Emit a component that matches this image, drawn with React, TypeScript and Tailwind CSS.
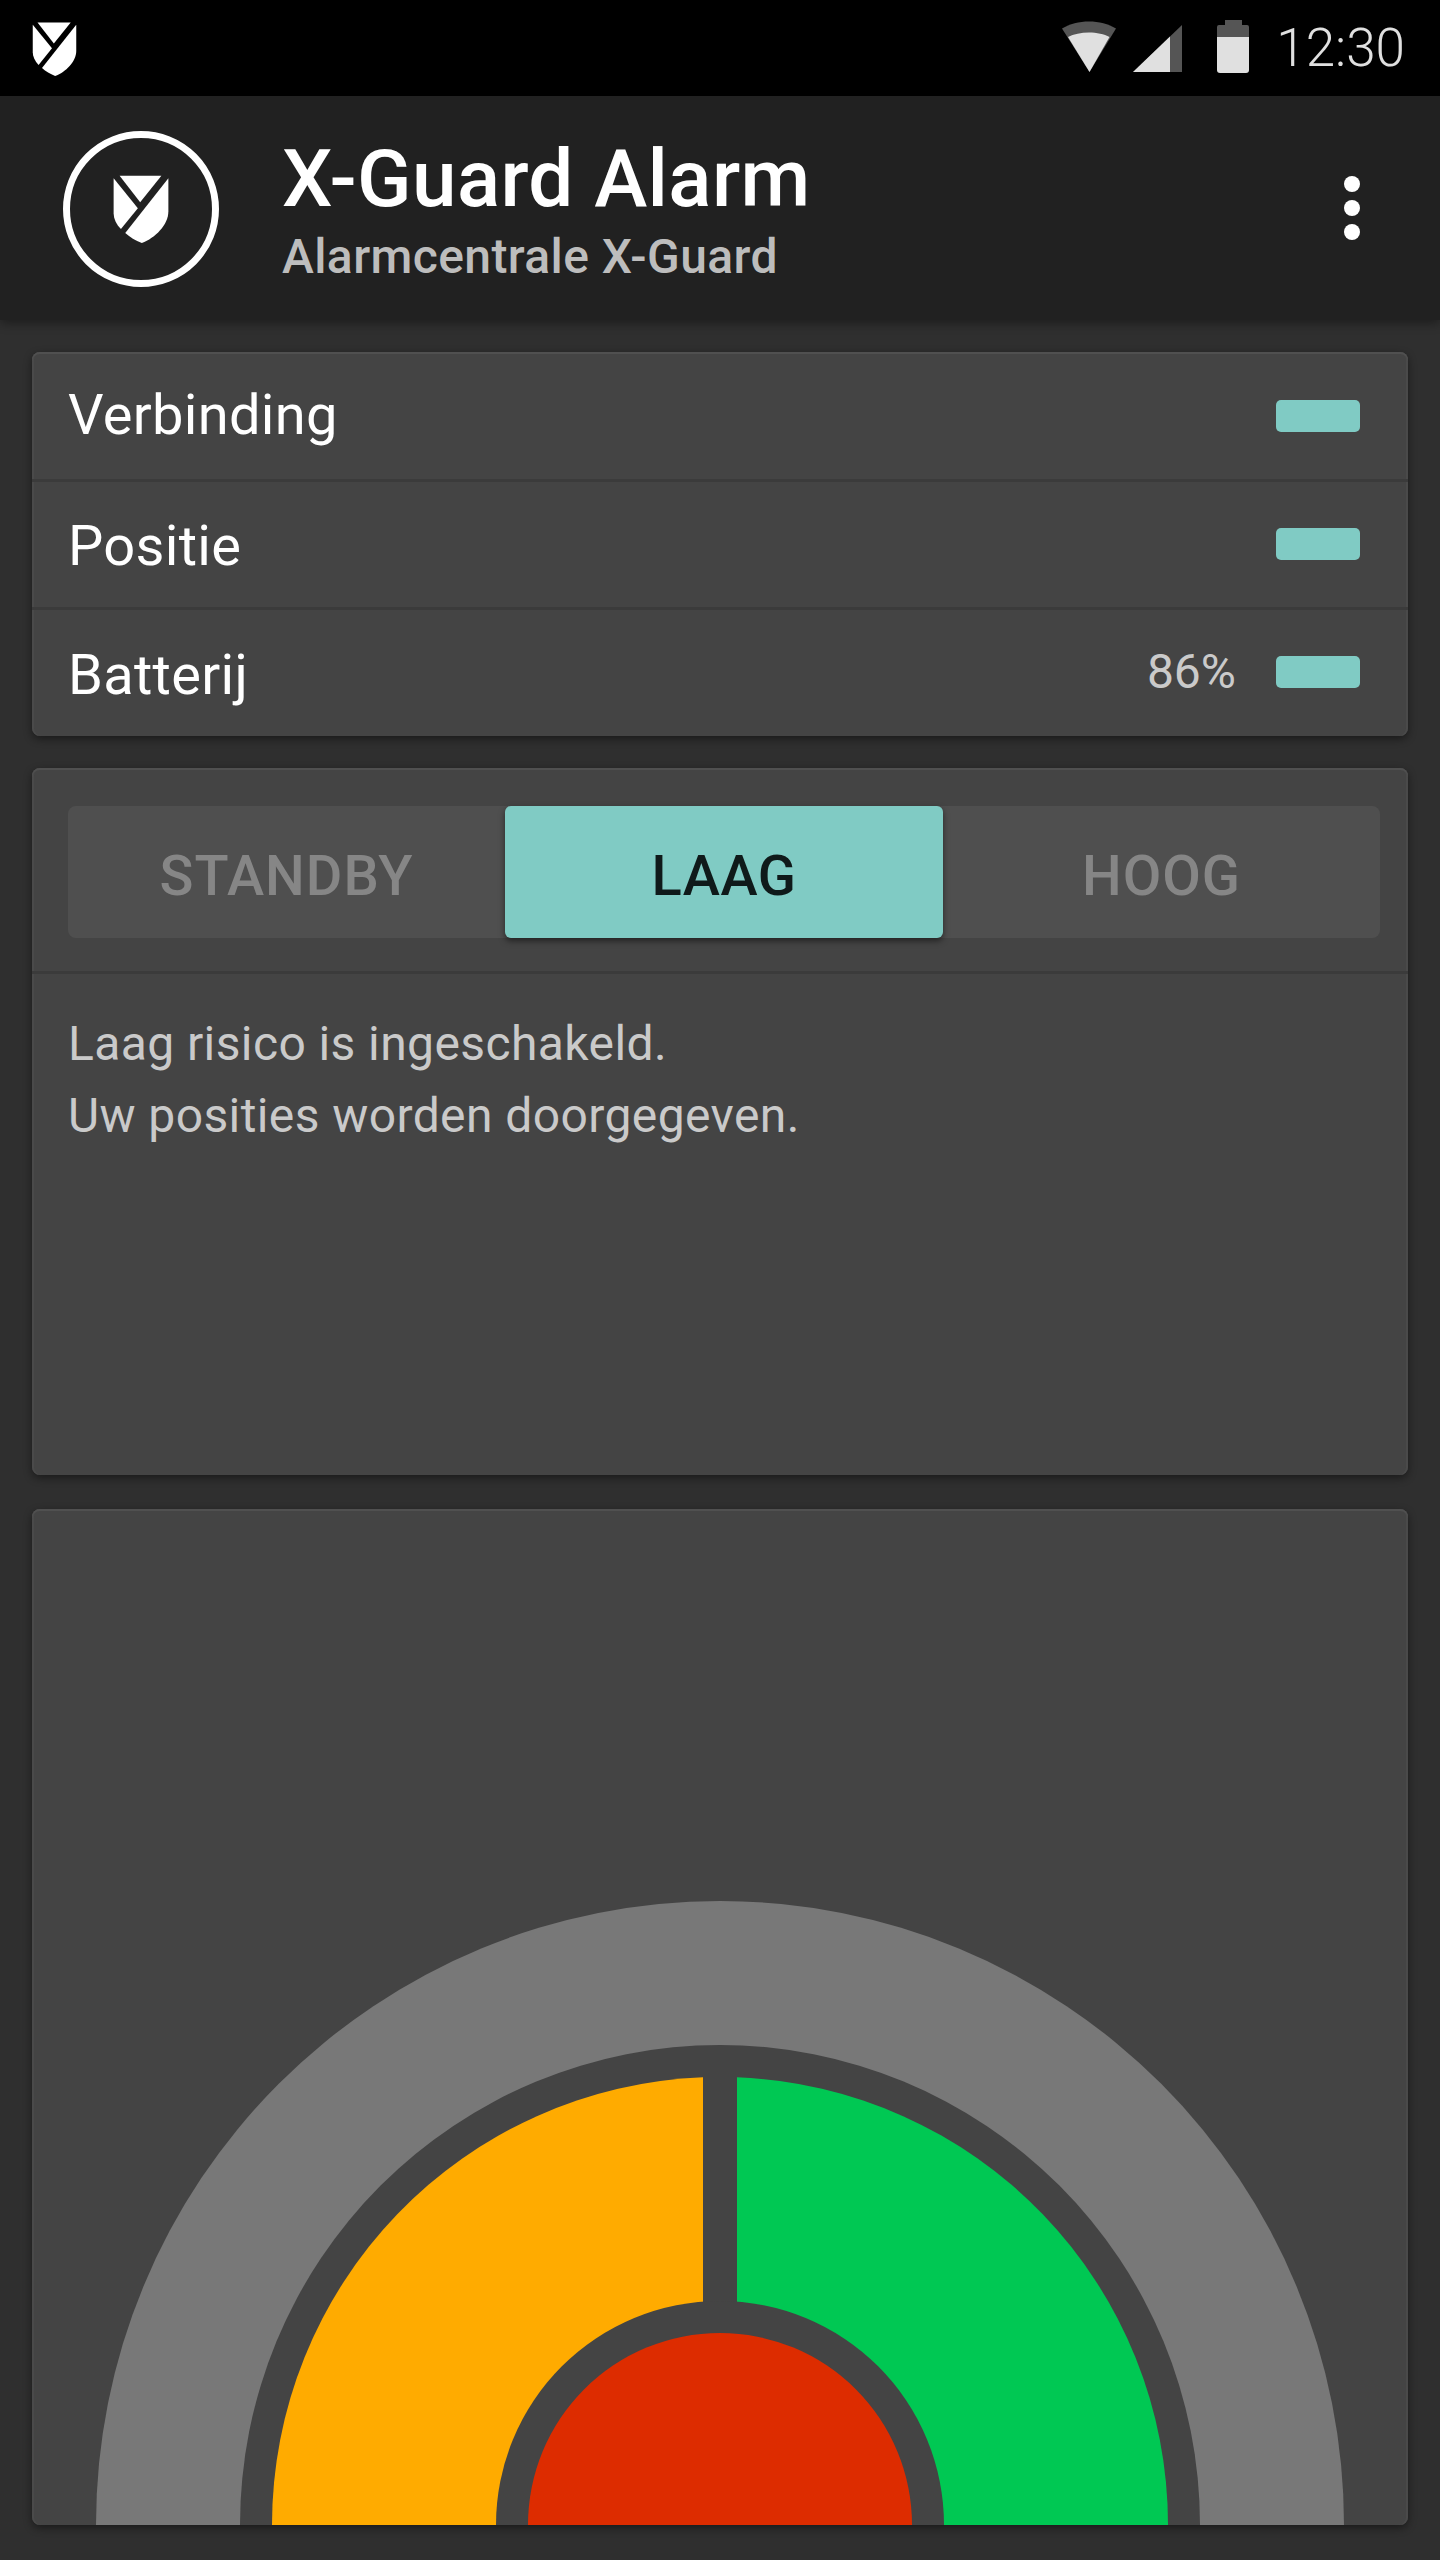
const SANS = "font-['Roboto',sans-serif]";

function Shield({ className }: { className: string }) {
  return (
    <svg viewBox="0 0 165 205" className={className} fill="currentColor">
      <path d="M18 2H144L80 82Z" />
      <path d="M0 10L73 100L22 163C8 148 0 132 0 115Z" />
      <path d="M165 10V110C165 150 125 190 85 205C65 198 50 188 35 175Z" />
    </svg>
  );
}

function StatusIcons() {
  return (
    <svg viewBox="0 0 190 56" className="w-[190px] h-[56px] mr-[24px]">
      <path d="M0 8.5C15 -1 39 -1 54 8.5L27.5 52Z" fill="#555555" />
      <path d="M6 17C17 11 37 11 47.5 17L27.5 52Z" fill="#e0e0e0" />
      <path d="M71 52L120 5V52Z" fill="#555555" />
      <path d="M71 52L108 16.5V52Z" fill="#e0e0e0" />
      <path d="M163 0H180V5H185Q187 5 187 7V17H155V7Q155 5 157 5H163Z" fill="#555555" />
      <path d="M155 17H187V50Q187 53 184 53H158Q155 53 155 50Z" fill="#e0e0e0" />
    </svg>
  );
}

function StatusRow({ label, value, rowClass, textClass }: { label: string; value?: string; rowClass: string; textClass: string }) {
  return (
    <div className={"h-[128px] flex items-center pl-[36px] pr-[48px] " + rowClass}>
      <span className={"text-[56px] leading-none tracking-[0.3px] text-white flex-1 " + textClass}>{label}</span>
      {value && <span className="text-[48px] leading-none text-[#cacaca] mr-[40px]">{value}</span>}
      <div className="w-[84px] h-[32px] rounded-[5px] bg-[#80cbc4]" />
    </div>
  );
}

function Card({ className, children }: { className: string; children: React.ReactNode }) {
  return (
    <section
      className={
        "rounded-[8px] bg-[#444444] overflow-hidden shadow-[0_3px_8px_rgba(0,0,0,0.45),inset_0_2px_0_#505050,inset_2px_0_0_#4a4a4a,inset_-2px_0_0_#4a4a4a] " +
        className
      }
    >
      {children}
    </section>
  );
}

function Gauge() {
  return (
    <svg viewBox="0 0 1376 624" className="block w-[1376px] h-[624px]">
      <path d="M64 624A624 624 0 0 1 1312 624Z" fill="#787878" />
      <path d="M208 624A480 480 0 0 1 1168 624Z" fill="#444444" />
      <path d="M240 624A448 448 0 0 1 671 176.3V624Z" fill="#ffab00" />
      <path d="M705 176.3A448 448 0 0 1 1136 624H705Z" fill="#00c853" />
      <path d="M464 624A224 224 0 0 1 912 624Z" fill="#444444" />
      <path d="M496 624A192 192 0 0 1 880 624Z" fill="#dd2c00" />
    </svg>
  );
}

export default function App() {
  return (
    <div className={"w-[1440px] h-[2560px] overflow-hidden bg-[#2f2f2f] " + SANS}>
      <div className="h-24 bg-black flex items-center text-white">
        <Shield className="w-[45px] h-[54px] ml-8 mt-[2px]" />
        <div className="flex-1" />
        <StatusIcons />
        <span className="text-[53px] leading-none font-light text-[#e0e0e0] mr-[35px]">12:30</span>
      </div>

      <header className="h-[224px] bg-[#212121] flex items-center pl-[63px] pr-[80px] shadow-[0_3px_10px_rgba(0,0,0,0.4)]">
        <div className="w-[156px] h-[156px] mt-[2px] rounded-full border-[7px] border-white flex items-center justify-center text-white">
          <Shield className="w-[56px] h-[68px]" />
        </div>
        <div className="ml-[63px] flex-1 pt-[8px]">
          <div className="text-[80px] leading-[84px] tracking-[0.4px] font-medium text-white -mt-[2px]">X-Guard Alarm</div>
          <div className="text-[48px] leading-[56px] tracking-[0.4px] font-medium text-[#bdbdbd] mt-[8px]">Alarmcentrale X-Guard</div>
        </div>
        <div className="flex flex-col gap-2">
          <div className="w-4 h-4 rounded-full bg-white" />
          <div className="w-4 h-4 rounded-full bg-white" />
          <div className="w-4 h-4 rounded-full bg-white" />
        </div>
      </header>

      <main className="px-8 pt-[32px] flex flex-col gap-8">
        <Card className="h-[384px]">
          <StatusRow label="Verbinding" rowClass="shadow-[inset_0_-1px_0_#3b3b3b]" textClass="mb-[3px]" />
          <StatusRow label="Positie" rowClass="shadow-[inset_0_2px_0_#3b3b3b,inset_0_-1px_0_#3b3b3b]" textClass="mt-[4px]" />
          <StatusRow label="Batterij" value="86%" rowClass="shadow-[inset_0_2px_0_#3b3b3b]" textClass="mt-[6px]" />
        </Card>

        <Card className="h-[707px]">
          <div className="h-[206px] pl-[36px] pr-[28px] pt-[38px] border-b-[3px] border-[#3b3b3b]">
            <div className="h-[132px] rounded-[8px] bg-[#4f4f4f] flex">
              <div className="flex-1 flex items-center justify-center text-[56px] tracking-[1px] font-medium text-[#868686] pt-[8px]">STANDBY</div>
              <div className="w-[438px] flex items-center justify-center text-[56px] tracking-[0.5px] font-medium text-[#0f1a1a] bg-[#80cbc4] rounded-[6px] shadow-[0_3px_6px_rgba(0,0,0,0.5)] pt-[8px]">LAAG</div>
              <div className="flex-1 flex items-center justify-center text-[56px] tracking-[1px] font-medium text-[#868686] pt-[8px]">HOOG</div>
            </div>
          </div>
          <div className="pl-[36px] pt-[34px] text-[48px] leading-[72px] tracking-[0.4px] text-[#cacaca]">
            <p>Laag risico is ingeschakeld.</p>
            <p>Uw posities worden doorgegeven.</p>
          </div>
        </Card>

        <Card className="h-[1016px] mt-[2px] flex flex-col justify-end">
          <Gauge />
        </Card>
      </main>
    </div>
  );
}
